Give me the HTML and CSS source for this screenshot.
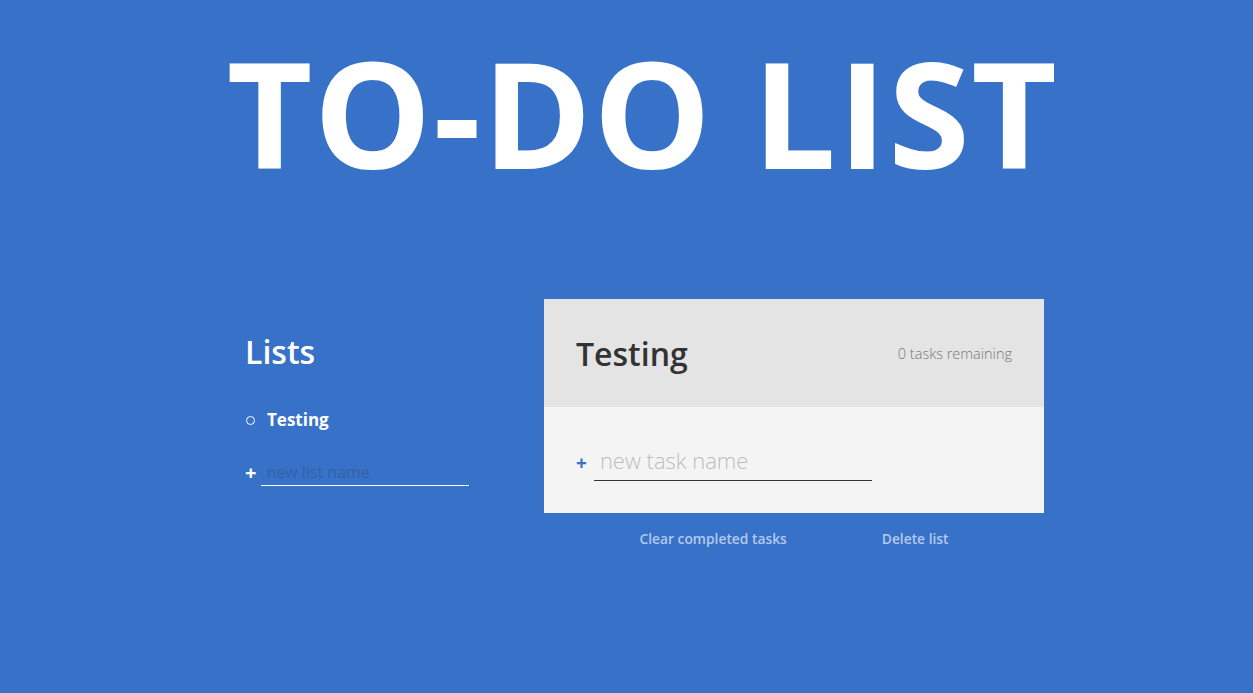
FILE: index.html
```html
<!DOCTYPE html>
<html lang="en">
<head>
<meta charset="utf-8">
<title>To-Do List</title>
<link rel="stylesheet" href="styles.css">
</head>
<body>
  <h1 class="title">TO-DO LIST</h1>
  <main class="layout">
    <section class="lists">
      <h2 class="lists-title">Lists</h2>
      <ul class="list-items">
        <li class="list-item">Testing</li>
      </ul>
      <form class="new-list">
        <span class="plus">+</span>
        <input class="new-list-input" type="text" placeholder="new list name">
      </form>
    </section>
    <section class="todo">
      <div class="card">
        <div class="card-header">
          <h2 class="card-title">Testing</h2>
          <p class="remaining">0 tasks remaining</p>
        </div>
        <div class="card-body">
          <form class="new-task">
            <span class="plus plus-blue">+</span>
            <input class="new-task-input" type="text" placeholder="new task name">
          </form>
        </div>
      </div>
      <div class="actions">
        <button class="action">Clear completed tasks</button>
        <button class="action">Delete list</button>
      </div>
    </section>
  </main>
</body>
</html>
```

FILE: styles.css
```css
* { box-sizing: border-box; }
html, body { margin: 0; padding: 0; }
body {
  background: #3872c8;
  font-family: "Open Sans", "Noto Sans", sans-serif;
  color: #fff;
  min-height: 693px;
}
.title {
  margin: 38px 0 0;
  padding-left: 32px;
  text-align: center;
  font-size: 148px;
  line-height: 1;
  font-weight: 700;
  letter-spacing: 1.5px;
  color: #fff;
}
.layout {
  display: grid;
  grid-template-columns: 299px 500px;
  justify-content: center;
  padding-left: 36px;
  margin-top: 113px;
}
.lists { padding-top: 37px; }
.lists-title {
  margin: 0;
  font-size: 32px;
  line-height: 1;
  font-weight: 600;
}
.list-items {
  list-style: none;
  margin: 41px 0 0;
  padding: 0;
}
.list-item {
  display: flex;
  align-items: center;
  gap: 12px;
  font-size: 17px;
  font-weight: 700;
  line-height: 22px;
}
.list-item::before {
  content: "";
  width: 7px;
  height: 7px;
  border: 1.5px solid #fff;
  border-radius: 50%;
  margin-left: 1px;
}
.new-list {
  display: flex;
  align-items: flex-end;
  gap: 5px;
  margin-top: 30px;
}
.plus {
  font-size: 20px;
  font-weight: 700;
  line-height: 20px;
  padding-bottom: 3px;
}
.new-list-input {
  width: 208px;
  border: 0;
  border-bottom: 1px solid #fff;
  background: transparent;
  font-family: inherit;
  font-size: 16px;
  font-weight: 400;
  color: #fff;
  padding: 0 0 2px 5px;
  outline: none;
}
.new-list-input::placeholder { color: #3161a8; }
.card { width: 500px; }
.card-header {
  background: #e4e4e4;
  height: 108px;
  padding: 0 32px;
  display: flex;
  align-items: center;
  justify-content: space-between;
}
.card-title {
  margin: 0;
  font-size: 32px;
  font-weight: 600;
  color: #333;
}
.remaining {
  margin: 0;
  font-size: 14.5px;
  font-weight: 300;
  color: #777;
}
.card-body {
  background: #f4f4f4;
  height: 106px;
  padding: 38px 32px 0 32px;
}
.new-task {
  display: flex;
  align-items: flex-end;
  gap: 7px;
}
.plus-blue {
  color: #3872c8;
  font-size: 19px;
  font-weight: 700;
  padding-bottom: 8px;
}
.new-task-input {
  width: 278px;
  border: 0;
  border-bottom: 1px solid #333;
  background: transparent;
  font-family: inherit;
  font-size: 22px;
  font-weight: 300;
  color: #333;
  padding: 0 0 5px 6px;
  outline: none;
}
.new-task-input::placeholder { color: #bdbdbd; }
.actions {
  display: flex;
  justify-content: center;
  gap: 95px;
  margin-top: 16px;
}
.action {
  background: none;
  border: 0;
  padding: 0;
  font-family: inherit;
  font-size: 13.8px;
  font-weight: 600;
  color: #b4c9ee;
  cursor: pointer;
}
```
